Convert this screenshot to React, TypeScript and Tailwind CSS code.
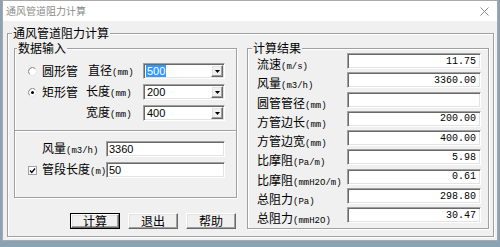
import React from 'react';

const cjk = "font-['Noto_Sans_CJK_SC','Noto_Sans_CJK_JP',sans-serif]";
const sunken =
  'bg-white border border-t-[#a0a0a0] border-l-[#a0a0a0] border-r-white border-b-white shadow-[inset_1px_1px_0_#696969,inset_-1px_-1px_0_#e3e3e3]';
const raised =
  'bg-[#f0f0f0] border border-t-white border-l-white border-r-[#696969] border-b-[#696969] shadow-[inset_-1px_-1px_0_#a0a0a0,inset_1px_1px_0_#e3e3e3]';
const etched = 'border border-[#a0a0a0] shadow-[inset_1px_1px_0_#fff,1px_1px_0_#fff]';

const Lbl = ({ zh, en }: { zh: string; en: string }) => (
  <span className="whitespace-nowrap text-[12px] leading-[12px] text-black">
    {zh}
    <span className="font-['Liberation_Mono',monospace] text-[9px] leading-[12px]">{en}</span>
  </span>
);

const Radio = ({ checked }: { checked?: boolean }) => (
  <svg width="9" height="9" viewBox="0 0 9 9" className="shrink-0">
    <circle cx="4.5" cy="4.5" r="4" fill="#fff" />
    <path d="M1.67 7.33 A4 4 0 0 1 7.33 1.67" fill="none" stroke="#808080" />
    <path d="M7.33 1.67 A4 4 0 0 1 1.67 7.33" fill="none" stroke="#e3e3e3" />
    {checked && <circle cx="4.5" cy="4.5" r="1.5" fill="#000" />}
  </svg>
);

const Check = () => (
  <svg width="9" height="9" viewBox="0 0 9 9" className="shrink-0">
    <rect x="0.5" y="0.5" width="8" height="8" fill="#fff" stroke="#a0a0a0" />
    <path d="M2 4.5 L3.8 6.5 L7 2.5" fill="none" stroke="#000" strokeWidth="1.3" />
  </svg>
);

const Combo = ({ value, selected }: { value: string; selected?: boolean }) => (
  <div className={`${sunken} w-[82px] h-[16px] flex items-stretch p-px`}>
    <div className="flex-1 flex items-center pl-px">
      <span
        className={`font-['Liberation_Sans',sans-serif] text-[11px] leading-[12px] px-px ${
          selected ? 'bg-[#3399ff] text-white' : 'text-black'
        }`}
      >
        {value}
      </span>
    </div>
    <div className={`${raised} w-[12px] flex items-center justify-center`}>
      <svg width="5" height="3" viewBox="0 0 5 3">
        <path d="M0 0 H5 L2.5 3 Z" fill="#000" />
      </svg>
    </div>
  </div>
);

const Edit = ({ value }: { value: string }) => (
  <div className={`${sunken} w-[119px] h-[16px] flex items-center pl-[2px]`}>
    <span className="font-['Liberation_Sans',sans-serif] text-[11px] leading-[12px] text-black">{value}</span>
  </div>
);

const results = [
  { zh: '流速', en: '(m/s)', v: '11.75' },
  { zh: '风量', en: '(m3/h)', v: '3360.00' },
  { zh: '圆管管径', en: '(mm)', v: '' },
  { zh: '方管边长', en: '(mm)', v: '200.00' },
  { zh: '方管边宽', en: '(mm)', v: '400.00' },
  { zh: '比摩阻', en: '(Pa/m)', v: '5.98' },
  { zh: '比摩阻', en: '(mmH2O/m)', v: '0.61' },
  { zh: '总阻力', en: '(Pa)', v: '298.80' },
  { zh: '总阻力', en: '(mmH2O)', v: '30.47' },
];

const Btn = ({ label, def }: { label: string; def?: boolean }) =>
  def ? (
    <div className="w-[50px] h-[16px] border border-black flex">
      <div className={`${raised} flex-1 flex items-center justify-center text-[12px] leading-[12px]`}>{label}</div>
    </div>
  ) : (
    <div className={`${raised} w-[50px] h-[16px] flex items-center justify-center text-[12px] leading-[12px]`}>
      {label}
    </div>
  );

export default function App() {
  return (
    <div className={`w-[500px] h-[247px] bg-[#8aa3b4] overflow-hidden text-[12px] leading-[12px] text-black ${cjk}`}>
      <div className="ml-[2px] w-[496px] h-[241px] border border-[#a9a9a9] bg-[#f0f0f0] flex flex-col">
        {/* title bar */}
        <div className="h-[20px] shrink-0 bg-white flex items-center justify-between pl-[3px] pr-[8px]">
          <span className="text-[10px] leading-[10px] text-[#8c8c8c]">通风管道阻力计算</span>
          <svg width="9" height="9" viewBox="0 0 9 9">
            <path d="M0.5 0.5 L8.5 8.5 M8.5 0.5 L0.5 8.5" stroke="#8c8c8c" />
          </svg>
        </div>

        <div className="flex-1 min-h-0 pl-[4px] pr-[3px] pt-[6px] pb-[3px]">
          <fieldset className={`${etched} h-full pl-[6px] pr-[4px] pt-[3px]`}>
            <legend className="-ml-[2px] px-px bg-[#f0f0f0] text-[12px] leading-[12px]">通风管道阻力计算</legend>
            <div className="flex gap-[10px]">
              {/* left column */}
              <div className="w-[223px] flex flex-col">
                <fieldset className={`${etched} h-[89px] pl-[13px] pt-[9px]`}>
                  <legend className="-ml-[11px] px-px bg-[#f0f0f0] text-[12px] leading-[12px]">数据输入</legend>
                  <div className="flex flex-col gap-[5px]">
                    <div className="flex items-center h-[16px]">
                      <div className="w-[58px] flex items-center gap-[5px]">
                        <Radio />
                        <span className="text-[12px] leading-[12px]">圆形管</span>
                      </div>
                      <div className="w-[57px] pl-[2px]">
                        <Lbl zh="直径" en="(mm)" />
                      </div>
                      <Combo value="500" selected />
                    </div>
                    <div className="flex items-center h-[16px]">
                      <div className="w-[58px] flex items-center gap-[5px]">
                        <Radio checked />
                        <span className="text-[12px] leading-[12px]">矩形管</span>
                      </div>
                      <div className="w-[57px]">
                        <Lbl zh="长度" en="(mm)" />
                      </div>
                      <Combo value="200" />
                    </div>
                    <div className="flex items-center h-[16px]">
                      <div className="w-[58px]" />
                      <div className="w-[57px]">
                        <Lbl zh="宽度" en="(mm)" />
                      </div>
                      <Combo value="400" />
                    </div>
                  </div>
                </fieldset>

                <div className="h-[67px] border-x border-b border-[#a0a0a0] shadow-[inset_1px_0_0_#fff,1px_1px_0_#fff] pl-[13px] pt-[10px] flex flex-col gap-[5px]">
                  <div className="flex items-center h-[16px]">
                    <div className="w-[78px] pl-[14px]">
                      <Lbl zh="风量" en="(m3/h)" />
                    </div>
                    <Edit value="3360" />
                  </div>
                  <div className="flex items-center h-[16px]">
                    <div className="w-[78px] flex items-center gap-[5px]">
                      <Check />
                      <Lbl zh="管段长度" en="(m)" />
                    </div>
                    <Edit value="50" />
                  </div>
                </div>

                <div className="mt-[15px] pl-[56px] flex gap-[8px]">
                  <Btn label="计算" def />
                  <Btn label="退出" />
                  <Btn label="帮助" />
                </div>
              </div>

              {/* results */}
              <fieldset className={`${etched} w-[242px] h-[187px] pl-[9px]`}>
                <legend className="-ml-[5px] px-px bg-[#f0f0f0] text-[12px] leading-[12px]">计算结果</legend>
                <div className="-mt-px flex flex-col gap-[3.3px]">
                  {results.map((r, i) => (
                    <div key={i} className="flex items-start h-[16px]">
                      <div className="w-[90px] pt-[5px]">
                        <Lbl zh={r.zh} en={r.en} />
                      </div>
                      <div
                        className={`${sunken} w-[134px] h-[16px] flex items-center justify-end pr-[4px] pt-px font-['Liberation_Mono',monospace] text-[10px] leading-[12px] text-black`}
                      >
                        {r.v}
                      </div>
                    </div>
                  ))}
                </div>
              </fieldset>
            </div>
          </fieldset>
        </div>
      </div>
    </div>
  );
}
